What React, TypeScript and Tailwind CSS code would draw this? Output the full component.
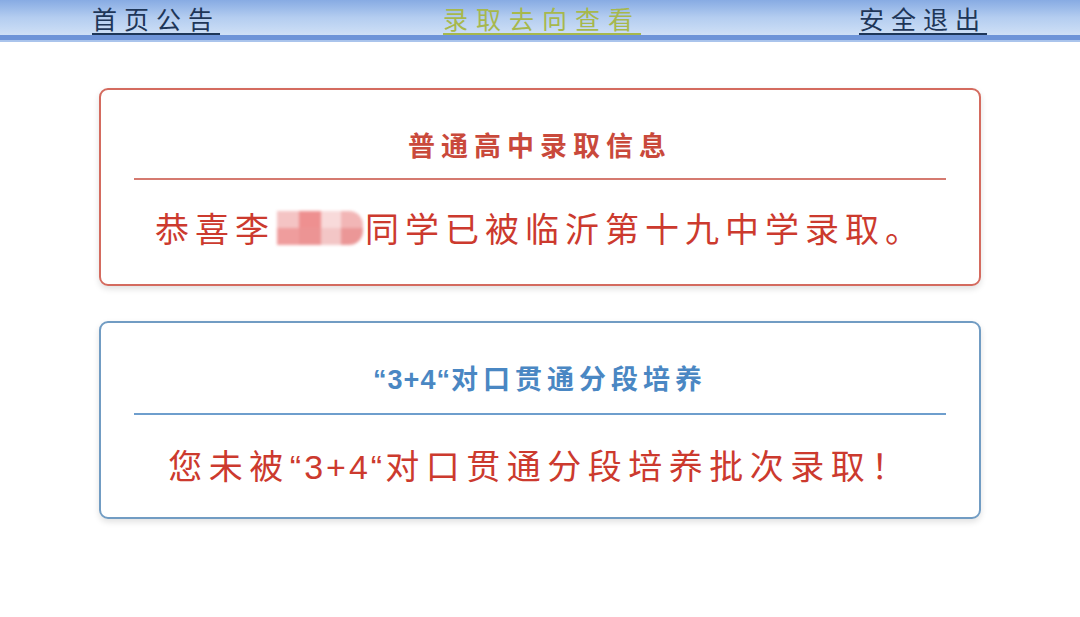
import React from "react";

const cjk = { fontFamily: '"Noto Sans CJK SC", "Noto Sans", sans-serif' };

function Blur() {
  return (
    <span className="inline-flex align-middle w-[86px] h-[34px] mx-[2px] blur-[1.5px] overflow-hidden rounded-r-[14px]">
      <span className="flex flex-col w-[22px]">
        <span className="h-1/2 bg-[#f4c4c4]" />
        <span className="h-1/2 bg-[#ef9d9d]" />
      </span>
      <span className="flex flex-col w-[22px]">
        <span className="h-1/2 bg-[#ee9090]" />
        <span className="h-1/2 bg-[#ec9494]" />
      </span>
      <span className="flex flex-col w-[20px]">
        <span className="h-1/2 bg-[#f8dada]" />
        <span className="h-1/2 bg-[#f3c6c6]" />
      </span>
      <span className="flex flex-col w-[22px]">
        <span className="h-1/2 bg-[#f2b6b6]" />
        <span className="h-1/2 bg-[#eb9797]" />
      </span>
    </span>
  );
}

function Q({ children, cls }: { children: React.ReactNode; cls: string }) {
  return (
    <span className={cls} style={{ fontFamily: '"Liberation Sans", Arial, sans-serif' }}>
      {children}
    </span>
  );
}

export default function App() {
  return (
    <div className="w-[1080px] h-[617px] bg-white overflow-hidden" style={cjk}>
      <header className="h-[42px] flex flex-col">
        <div className="h-[35px] bg-gradient-to-b from-[#87abe3] via-[#b4cdf0] to-[#cfe0f6] flex items-center">
          <a className="ml-[92px] w-[140px] text-[25px] leading-[34px] tracking-[7px] text-[#1e3658] underline underline-offset-[4px] decoration-[2px]">首页公告</a>
          <a className="ml-[211px] w-[210px] text-[25px] leading-[34px] tracking-[8px] text-[#a7b84c] underline underline-offset-[4px] decoration-[2px]">录取去向查看</a>
          <a className="ml-[206px] text-[25px] leading-[34px] tracking-[7px] text-[#1e3658] underline underline-offset-[4px] decoration-[2px]">安全退出</a>
        </div>
        <div className="h-[5px] bg-[#6e94d8]" />
        <div className="h-[2px] bg-[#aac4ec]" />
      </header>

      <main className="flex flex-col items-center pt-[46px] gap-[35px]">
        <section className="w-[882px] h-[198px] border-2 border-[#d46b5f] rounded-[9px] shadow-[0_3px_6px_rgba(0,0,0,0.12)] flex flex-col items-center pt-[37px]">
          <h2 className="text-[27px] leading-[36px] font-bold tracking-[6px] text-[#c9493b]">普通高中录取信息</h2>
          <div className="w-[812px] h-[2px] bg-[#d57a70] mt-[15px]" />
          <p className="mt-[26px] text-[34px] leading-[44px] tracking-[6px] text-[#cc3a2e] whitespace-nowrap flex items-center">
            <span>恭喜李</span>
            <Blur />
            <span>同学已被临沂第十九中学录取。</span>
          </p>
        </section>

        <section className="w-[882px] h-[198px] border-2 border-[#719cc3] rounded-[9px] shadow-[0_3px_6px_rgba(0,0,0,0.12)] flex flex-col items-center pt-[37px]">
          <h2 className="text-[27px] leading-[36px] font-bold tracking-[5px] text-[#4a87c3] whitespace-nowrap">
            <Q cls="tracking-[1px]">“3+4“</Q>对口贯通分段培养
          </h2>
          <div className="w-[812px] h-[2px] bg-[#6e9ecd] mt-[15px]" />
          <p className="mt-[28px] text-[34px] leading-[44px] tracking-[6.5px] text-[#cc3a2e] whitespace-nowrap">
            您未被<Q cls="tracking-[3px]">“3+4“</Q>对口贯通分段培养批次录取！
          </p>
        </section>
      </main>
    </div>
  );
}
